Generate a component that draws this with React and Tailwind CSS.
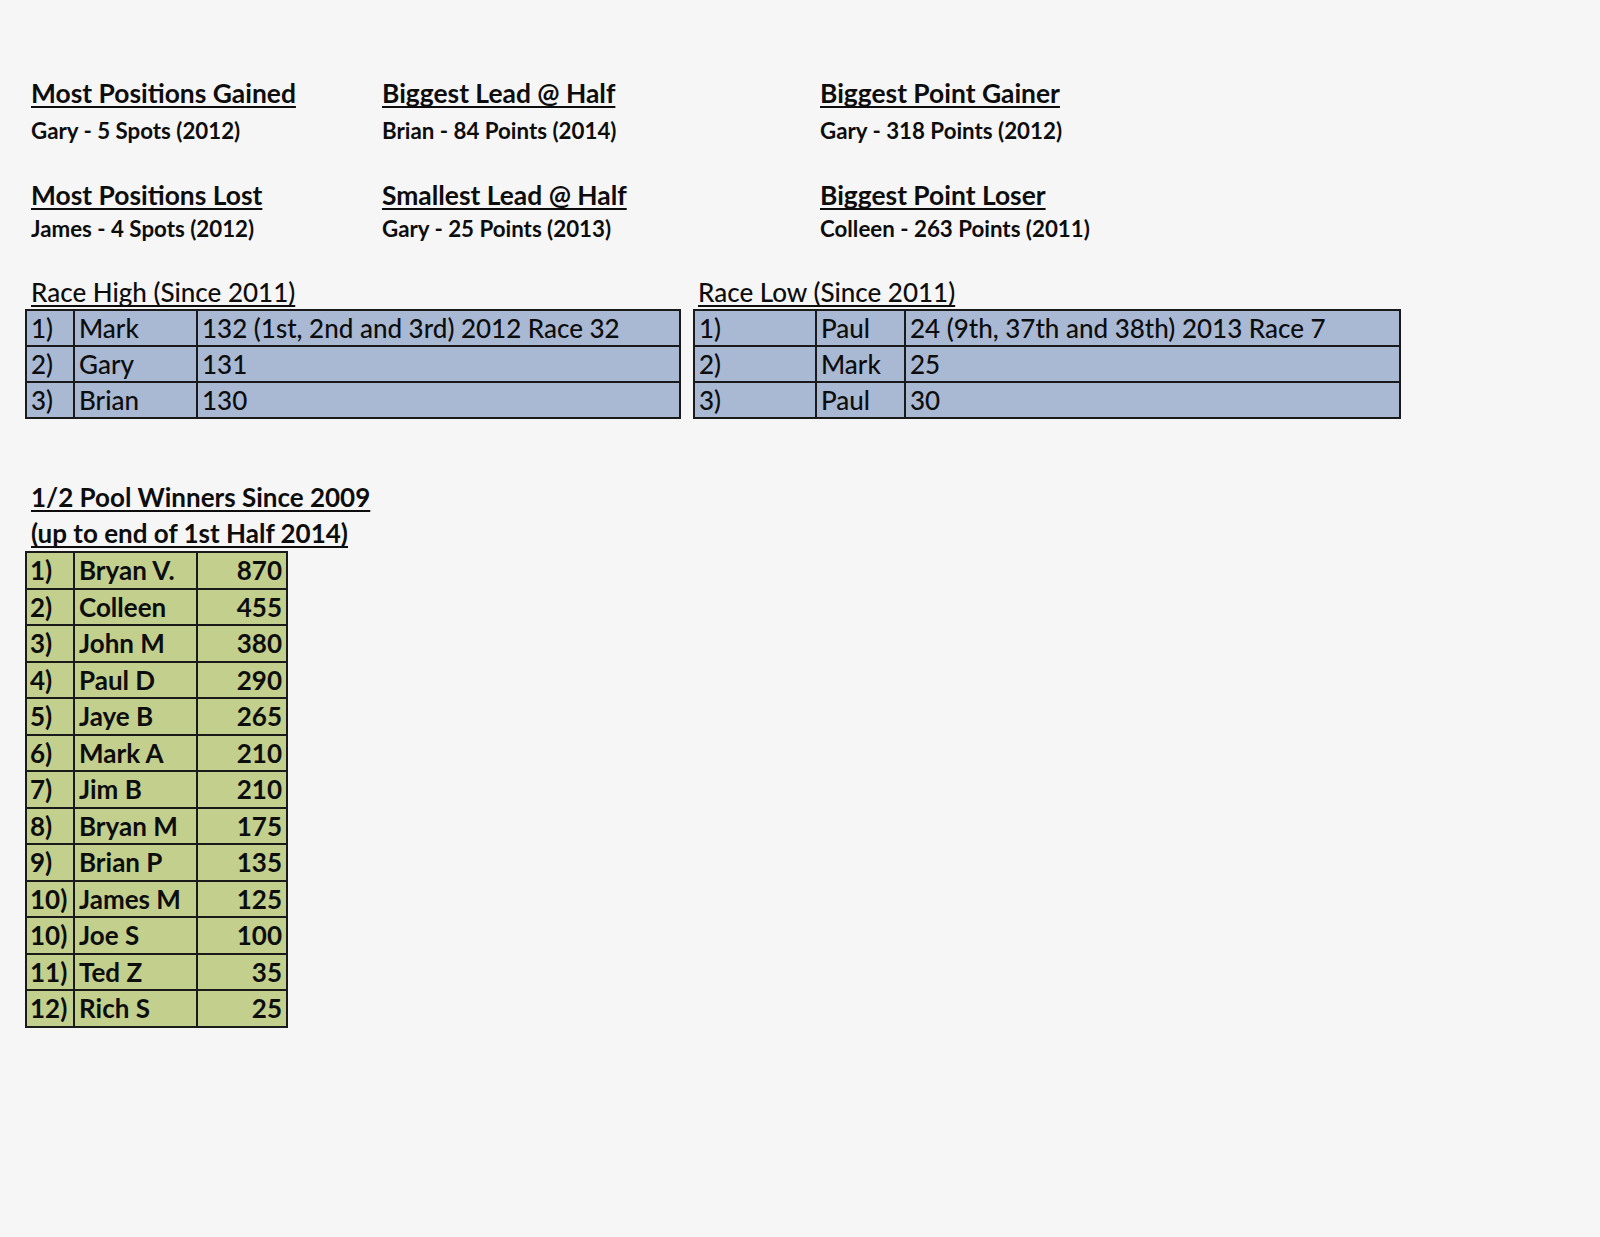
import React from "react";

const F = { fontFamily: "Lato, 'Open Sans', 'Liberation Sans', sans-serif" };

const U = "underline decoration-2 underline-offset-[3px] [text-decoration-skip-ink:none] whitespace-nowrap";

function Stat({ title, value, valueClass }) {
  return (
    <div className="flex flex-col">
      <div className={"text-[26.4px] leading-[26px] h-[26px] font-bold " + U}>
        {title}
      </div>
      <div className={"text-[22.3px] leading-[24px] h-[24px] font-bold whitespace-nowrap " + valueClass}>
        {value}
      </div>
    </div>
  );
}

function RaceTable({ cols, rows, className }) {
  return (
    <div className={"border-2 border-[#1a1a1a] bg-[#a9b9d4] font-medium " + className}>
      {rows.map((r, i) => (
        <div key={i} className={"flex " + (i > 0 ? "border-t-2 border-[#1a1a1a]" : "")}>
          {r.map((c, j) => (
            <div
              key={j}
              className={
                "h-[34px] leading-[34px] pl-[4px] text-[26px] whitespace-nowrap " +
                cols[j] +
                (j > 0 ? " border-l-2 border-[#1a1a1a]" : "")
              }
            >
              {c}
            </div>
          ))}
        </div>
      ))}
    </div>
  );
}

const pool = [
  ["1)", "Bryan V.", "870"],
  ["2)", "Colleen", "455"],
  ["3)", "John M", "380"],
  ["4)", "Paul D", "290"],
  ["5)", "Jaye B", "265"],
  ["6)", "Mark A", "210"],
  ["7)", "Jim B", "210"],
  ["8)", "Bryan M", "175"],
  ["9)", "Brian P", "135"],
  ["10)", "James M", "125"],
  ["10)", "Joe S", "100"],
  ["11)", "Ted Z", "35"],
  ["12)", "Rich S", "25"],
];

export default function App() {
  return (
    <div style={F} className="w-[1600px] min-h-[1237px] bg-[#f7f6f6] text-[#0d0d0d]">
      <div className="pt-[80px]">
        <div className="pl-[31px] grid grid-cols-[351px_438px_1fr]">
          <Stat title="Most Positions Gained" value="Gary - 5 Spots (2012)" valueClass="mt-[13px]" />
          <Stat title="Biggest Lead @ Half" value="Brian - 84 Points (2014)" valueClass="mt-[13px]" />
          <Stat title="Biggest Point Gainer" value="Gary - 318 Points (2012)" valueClass="mt-[13px]" />
        </div>
        <div className="pl-[31px] mt-[39px] grid grid-cols-[351px_438px_1fr]">
          <Stat title="Most Positions Lost" value="James - 4 Spots (2012)" valueClass="mt-[9px]" />
          <Stat title="Smallest Lead @ Half" value="Gary - 25 Points (2013)" valueClass="mt-[9px]" />
          <Stat title="Biggest Point Loser" value="Colleen - 263 Points (2011)" valueClass="mt-[9px]" />
        </div>

        <div className="mt-[33px] pl-[25px] flex gap-[12px]">
          <div className="flex flex-col">
            <div className={"pl-[6px] text-[26px] font-medium leading-[36px] h-[36px] " + U}>
              Race High (Since 2011)
            </div>
            <RaceTable
              className="w-[656px] mt-[-1px]"
              cols={["w-[46px]", "w-[123px]", "flex-1"]}
              rows={[
                ["1)", "Mark", "132 (1st, 2nd and 3rd) 2012 Race 32"],
                ["2)", "Gary", "131"],
                ["3)", "Brian", "130"],
              ]}
            />
          </div>
          <div className="flex flex-col">
            <div className={"pl-[5px] text-[26px] font-medium leading-[36px] h-[36px] " + U}>
              Race Low (Since 2011)
            </div>
            <RaceTable
              className="w-[708px] mt-[-1px]"
              cols={["w-[120px]", "w-[89px]", "flex-1"]}
              rows={[
                ["1)", "Paul", "24 (9th, 37th and 38th) 2013 Race 7"],
                ["2)", "Mark", "25"],
                ["3)", "Paul", "30"],
              ]}
            />
          </div>
        </div>

        <div className="mt-[60px] pl-[25px] flex flex-col">
          <div className="pl-[6px] text-[26px] leading-[36px] font-bold">
            <div className={U}>1/2 Pool Winners Since 2009</div>
            <div className={U}>(up to end of 1st Half 2014)</div>
          </div>
          <div className="mt-0 w-[263px] border-2 border-[#1a1a1a] bg-[#c2cf8d] font-bold">
            {pool.map((r, i) => (
              <div key={i} className={"flex " + (i > 0 ? "border-t-2 border-[#1a1a1a]" : "")}>
                <div className="w-[46px] h-[34.5px] leading-[34.5px] pl-[3px] text-[26px] whitespace-nowrap">{r[0]}</div>
                <div className="w-[123px] h-[34.5px] leading-[34.5px] pl-[4px] text-[26px] border-l-2 border-[#1a1a1a] whitespace-nowrap">{r[1]}</div>
                <div className="flex-1 h-[34.5px] leading-[34.5px] pr-[4px] text-right text-[26px] border-l-2 border-[#1a1a1a] whitespace-nowrap">{r[2]}</div>
              </div>
            ))}
          </div>
        </div>
      </div>
    </div>
  );
}
